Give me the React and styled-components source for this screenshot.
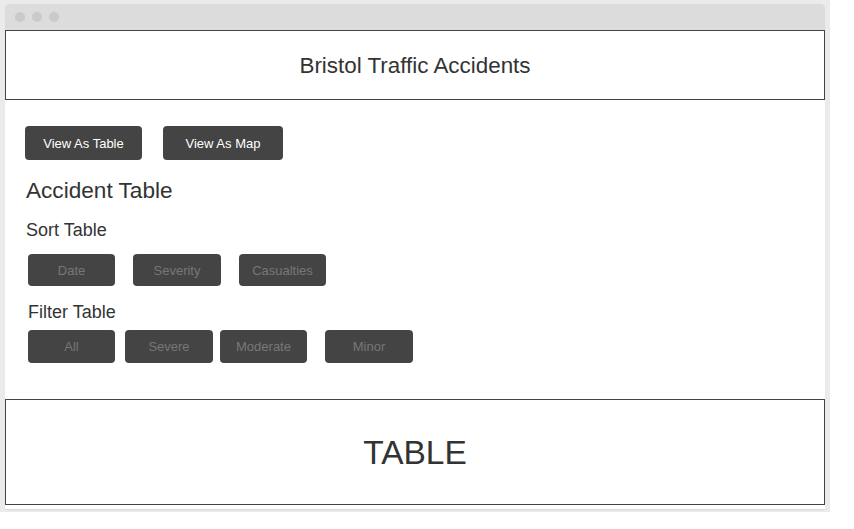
import React from "react";
import styled, { createGlobalStyle } from "styled-components";

const GlobalStyle = createGlobalStyle`
  html, body {
    margin: 0;
    padding: 0;
    background: #ffffff;
  }
  body {
    font-family: "Liberation Sans", Arial, sans-serif;
    color: #333333;
  }
`;

const Frame = styled.div`
  width: 830px;
  height: 512px;
  box-sizing: border-box;
  background: #ebebeb;
  padding: 4px 5px 3px 5px;
`;

const Window = styled.div`
  height: 100%;
  display: flex;
  flex-direction: column;
  background: #ffffff;
  border-radius: 4px 4px 0 0;
  box-shadow: 0 1px 1px rgba(0, 0, 0, 0.08);
`;

const TitleBar = styled.div`
  height: 26px;
  flex: none;
  display: flex;
  align-items: center;
  gap: 7px;
  padding-left: 10px;
  background: #dcdcdc;
  border-radius: 4px 4px 0 0;
`;

const Dot = styled.span`
  width: 10px;
  height: 10px;
  border-radius: 50%;
  background: #cacaca;
`;

const Banner = styled.div`
  height: ${(p) => p.h}px;
  flex: none;
  box-sizing: border-box;
  border: 1.5px solid #444444;
  padding-top: 2px;
  display: flex;
  align-items: center;
  justify-content: center;
  font-size: ${(p) => p.size}px;
  color: #333333;
`;

const Content = styled.div`
  flex: 1;
  padding: 26px 0 0 20px;
`;

const Row = styled.div`
  display: flex;
  padding-left: ${(p) => p.indent || 0}px;
`;

const Button = styled.button`
  width: ${(p) => p.w}px;
  height: ${(p) => p.h || 32}px;
  margin-right: ${(p) => p.gap || 0}px;
  border: none;
  border-radius: 4px;
  background: #444444;
  color: ${(p) => (p.dim ? "#777777" : "#ffffff")};
  font-family: "Liberation Sans", Arial, sans-serif;
  font-size: 13px;
  padding: 0;
  cursor: pointer;
`;

const Title = styled.div`
  font-size: 22.6px;
  line-height: 26px;
  margin: 18px 0 0 1px;
`;

const SubTitle = styled.div`
  font-size: 18px;
  line-height: 20px;
  margin: ${(p) => p.top}px 0 ${(p) => p.bottom}px ${(p) => p.left}px;
`;

export default function App() {
  return (
    <>
      <GlobalStyle />
      <Frame>
        <Window>
          <TitleBar>
            <Dot />
            <Dot />
            <Dot />
          </TitleBar>
          <Banner h={70} size={22.4}>
            Bristol Traffic Accidents
          </Banner>
          <Content>
            <Row>
              <Button w={117} h={34} gap={21}>
                View As Table
              </Button>
              <Button w={120} h={34}>
                View As Map
              </Button>
            </Row>
            <Title>Accident Table</Title>
            <SubTitle top={16} bottom={14} left={1}>
              Sort Table
            </SubTitle>
            <Row indent={3}>
              <Button dim w={87} gap={18}>
                Date
              </Button>
              <Button dim w={88} gap={18}>
                Severity
              </Button>
              <Button dim w={87}>
                Casualties
              </Button>
            </Row>
            <SubTitle top={16} bottom={8} left={3}>
              Filter Table
            </SubTitle>
            <Row indent={3}>
              <Button dim w={87} h={33} gap={10}>
                All
              </Button>
              <Button dim w={88} h={33} gap={7}>
                Severe
              </Button>
              <Button dim w={87} h={33} gap={18}>
                Moderate
              </Button>
              <Button dim w={88} h={33}>
                Minor
              </Button>
            </Row>
          </Content>
          <Banner h={106} size={33.5}>
            TABLE
          </Banner>
          <div style={{ height: 4, flex: "none" }} />
        </Window>
      </Frame>
    </>
  );
}
